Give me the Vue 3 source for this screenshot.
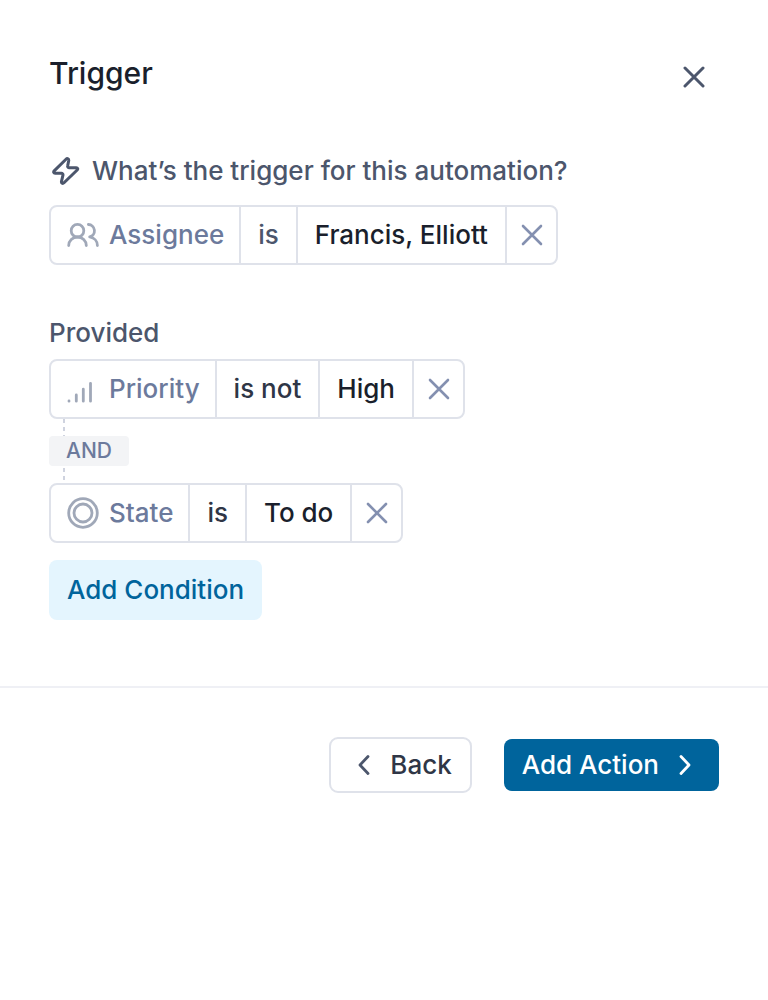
<script setup>
import { ref } from 'vue'

const trigger = ref({ field: 'Assignee', icon: 'people', operator: 'is', value: 'Francis, Elliott', soft: true })
const conditions = ref([
  { field: 'Priority', icon: 'bars', operator: 'is not', value: 'High' },
  { field: 'State', icon: 'rings', operator: 'is', value: 'To do' }
])
</script>

<template>
  <main class="panel">
    <section class="body">
      <header class="head">
        <h1>Trigger</h1>
        <button type="button" class="close" aria-label="Close">
          <svg width="22" height="22" viewBox="0 0 22 22"><path d="M2 2l18 18M20 2L2 20" /></svg>
        </button>
      </header>

      <h2 class="question">
        <svg width="28" height="32" viewBox="0 0 28 32">
          <path d="M14 4.200 2.200 15.900c-1 1-.5 2.300.9 2.300h6.200c1.200 0 1.900.9 1.600 2.100l-1.400 6c-.4 1.900 1.200 2.700 2.500 1.400l13.200-12.700c1-1 .5-2.300-.9-2.300h-7c-1.200 0-1.900-.9-1.600-2.100l1-4.900c.3-2-1.400-2.800-2.700-1.500z" />
        </svg>
        <span>What’s the trigger for this automation?</span>
      </h2>

      <template v-for="(group, g) in [[trigger], conditions]" :key="g">
        <h2 v-if="g === 1" class="label">Provided</h2>
        <template v-for="(rule, i) in group" :key="rule.field">
          <div v-if="i > 0" class="joiner">
            <svg class="dash" width="2" height="17" viewBox="0 0 2 17"><path d="M1 0v17" /></svg>
            <span class="and">AND</span>
            <svg class="dash" width="2" height="17" viewBox="0 0 2 17"><path d="M1 2v15" /></svg>
          </div>
          <div class="rule">
            <button type="button" class="field">
              <svg v-if="rule.icon === 'people'" width="32" height="32" viewBox="0 0 32 32">
                <circle cx="10.500" cy="11.700" r="6.300" />
                <path d="M1.700 26.500c0-4.900 3.900-8.500 8.800-8.500s8.800 3.600 8.800 8.500M21.400 5.500a6.300 6.300 0 0 1 1.300 12.400c4.600.8 7.700 4.300 7.700 8.600" />
              </svg>
              <svg v-else-if="rule.icon === 'bars'" width="32" height="32" viewBox="0 0 32 32">
                <path d="M2 28v.2M9.300 22v6.200M16.300 16.200v12M23.500 10.300v17.900" />
              </svg>
              <svg v-else width="32" height="32" viewBox="0 0 32 32">
                <circle cx="16" cy="16" r="14.300" />
                <circle cx="16" cy="16" r="9" />
              </svg>
              <span>{{ rule.field }}</span>
            </button>
            <button type="button" class="operator" :class="{ soft: rule.soft }">{{ rule.operator }}</button>
            <button type="button" class="value">{{ rule.value }}</button>
            <button type="button" class="remove" :aria-label="'Remove ' + rule.field">
              <svg width="22" height="22" viewBox="0 0 22 22"><path d="M2 2l18 18M20 2L2 20" /></svg>
            </button>
          </div>
        </template>
      </template>

      <button type="button" class="add">Add Condition</button>
    </section>

    <footer class="foot">
      <button type="button" class="back">
        <svg width="14" height="22" viewBox="0 0 14 22"><path d="M11 2.500 3 11l8 8.500" /></svg>
        <span>Back</span>
      </button>
      <button type="button" class="next">
        <span>Add Action</span>
        <svg width="14" height="22" viewBox="0 0 14 22"><path d="M3 2.500 11 11l-8 8.500" /></svg>
      </button>
    </footer>
  </main>
</template>

<style>
body {
  background: #fff;
}
</style>

<style scoped>
.panel {
  font-family: Inter, "Liberation Sans", sans-serif;
  font-size: 26px;
  font-weight: 500;
  line-height: 32px;
  color: #4c566c;
}
button {
  box-sizing: border-box;
  margin: 0;
  padding: 0;
  border: 0;
  background: none;
  font: inherit;
  color: inherit;
  white-space: nowrap;
  cursor: pointer;
}
svg {
  display: block;
  flex: none;
  fill: none;
  stroke: currentColor;
  stroke-width: 2.8;
  stroke-linecap: round;
  stroke-linejoin: round;
}
h1,
h2 {
  margin: 0;
  font-size: inherit;
  font-weight: inherit;
}
.body {
  display: flex;
  flex-direction: column;
  align-items: flex-start;
  padding: 52px 49px 66px;
  border-bottom: 2px solid #eff0f5;
}
.head {
  display: flex;
  align-self: stretch;
  align-items: flex-start;
  justify-content: space-between;
  margin-bottom: 53px;
}
h1 {
  font-size: 30px;
  line-height: 42px;
  color: #1a1f2c;
}
.close {
  padding: 14px;
}
.close svg,
.question svg {
  stroke-width: 3;
}
.question {
  display: flex;
  align-items: center;
  gap: 12px;
  margin-bottom: 18px;
  padding-left: 3px;
}
.label {
  margin: 52px 0 10px;
}
.rule {
  box-sizing: border-box;
  display: flex;
  height: 60px;
  border: 2px solid #dfe2ea;
  border-radius: 8px;
}
.rule button {
  padding: 0 17px;
}
.rule button + button {
  border-left: 2px solid #dfe2ea;
}
.rule .field {
  display: flex;
  align-items: center;
  gap: 10px;
  padding: 0 15px 0 16px;
  color: #6c7a9c;
}
.field svg {
  color: #a0a8b8;
}
.operator {
  color: #2f3646;
}
.soft {
  color: #4c566c;
}
.value {
  color: #1a1f2c;
}
.rule .remove {
  padding: 0 13px 0 14px;
  color: #8490b0;
}
.remove svg {
  stroke-width: 2.6;
}
.joiner {
  display: flex;
  flex-direction: column;
  align-items: flex-start;
}
.dash {
  margin-left: 14px;
  stroke: #cfd3df;
  stroke-width: 2;
  stroke-linecap: butt;
  stroke-dasharray: 4 4;
}
.and {
  padding: 0 17px;
  border-radius: 4px;
  background: #f3f4f6;
  font-size: 21px;
  line-height: 30px;
  color: #6c7a9c;
}
.add {
  height: 60px;
  margin-top: 17px;
  padding: 0 18px;
  border-radius: 8px;
  background: #e4f5fe;
  color: #00649c;
}
.foot {
  display: flex;
  align-items: center;
  justify-content: flex-end;
  gap: 32px;
  padding: 49px;
}
.back,
.next {
  display: flex;
  align-items: center;
}
.back {
  gap: 19px;
  height: 56px;
  padding: 0 18px 0 26px;
  border: 2px solid #dfe2ea;
  border-radius: 9px;
  color: #2f3646;
}
.back svg {
  color: #4c566c;
}
.next {
  gap: 19px;
  height: 52px;
  padding: 0 27px 0 18px;
  border-radius: 8px;
  background: #00649c;
  color: #fff;
}
</style>
